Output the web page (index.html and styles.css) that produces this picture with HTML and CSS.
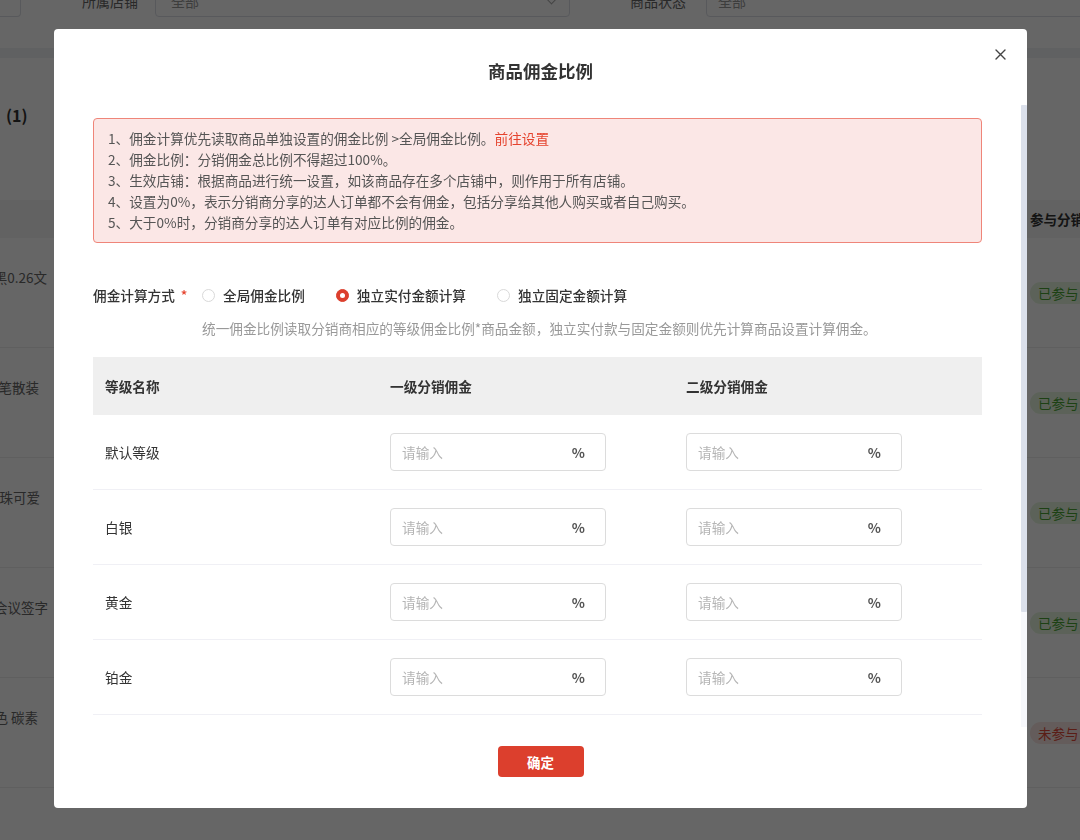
FILE: index.html
```html
<!DOCTYPE html>
<html lang="zh-CN">
<head>
<meta charset="utf-8">
<title>商品佣金比例</title>
<link rel="stylesheet" href="styles.css">
</head>
<body>
<div class="page">
  <div class="filter-card">
    <div class="filter-row">
      <div class="control first"></div>
      <span class="flabel l1">所属店铺</span>
      <div class="control select">全部<span class="chev"></span></div>
      <span class="flabel l2">商品状态</span>
      <div class="control status">全部</div>
    </div>
  </div>
  <div class="list-card">
    <div class="list-title">(1)</div>
    <div class="bg-table">
      <div class="bg-head">
        <div class="bg-name"></div>
        <div></div>
        <div class="bg-status">参与分销</div>
      </div>
      <div class="bg-row">
        <div class="bg-name"><span>色黑0.26文</span></div>
        <div></div>
        <div class="bg-status"><span class="pill on">已参与</span></div>
      </div>
      <div class="bg-row">
        <div class="bg-name"><span>性笔散装</span></div>
        <div></div>
        <div class="bg-status"><span class="pill on">已参与</span></div>
      </div>
      <div class="bg-row">
        <div class="bg-name"><span>圆珠可爱</span></div>
        <div></div>
        <div class="bg-status"><span class="pill on">已参与</span></div>
      </div>
      <div class="bg-row">
        <div class="bg-name"><span>公会议签字</span></div>
        <div></div>
        <div class="bg-status"><span class="pill on">已参与</span></div>
      </div>
      <div class="bg-row">
        <div class="bg-name"><span>黑色 碳素</span></div>
        <div></div>
        <div class="bg-status"><span class="pill off">未参与</span></div>
      </div>
      <div class="bg-row">
        <div class="bg-name"><span></span></div>
        <div></div>
        <div class="bg-status"></div>
      </div>
    </div>
  </div>
</div>

<div class="mask"></div>

<div class="modal">
  <div class="modal-header">商品佣金比例</div>
  <button class="close" aria-label="关闭">
    <svg width="11" height="11" viewBox="0 0 11 11"><path d="M1 1 L10 10 M10 1 L1 10" stroke="#444" stroke-width="1.4" stroke-linecap="round" fill="none"/></svg>
  </button>
  <div class="modal-body">
    <div class="notice">
      <p>1、佣金计算优先读取商品单独设置的佣金比例 &gt;全局佣金比例。<a class="notice-link">前往设置</a></p>
      <p>2、佣金比例：分销佣金总比例不得超过100%。</p>
      <p>3、生效店铺：根据商品进行统一设置，如该商品存在多个店铺中，则作用于所有店铺。</p>
      <p>4、设置为0%，表示分销商分享的达人订单都不会有佣金，包括分享给其他人购买或者自己购买。</p>
      <p>5、大于0%时，分销商分享的达人订单有对应比例的佣金。</p>
    </div>

    <div class="form-row">
      <div class="form-label">佣金计算方式<span class="req">*</span></div>
      <div class="radio-group">
        <label class="radio"><span class="radio-dot"></span>全局佣金比例</label>
        <label class="radio"><span class="radio-dot checked"></span>独立实付金额计算</label>
        <label class="radio"><span class="radio-dot"></span>独立固定金额计算</label>
      </div>
    </div>
    <div class="hint">统一佣金比例读取分销商相应的等级佣金比例*商品金额，独立实付款与固定金额则优先计算商品设置计算佣金。</div>

    <div class="level-table">
      <div class="thead">
        <div class="cell-name">等级名称</div>
        <div>一级分销佣金</div>
        <div>二级分销佣金</div>
      </div>
      <div class="trow">
        <div class="cell-name">默认等级</div>
        <div class="pct-input"><span class="ph">请输入</span><span class="pct">%</span></div>
        <div class="pct-input"><span class="ph">请输入</span><span class="pct">%</span></div>
      </div>
      <div class="trow">
        <div class="cell-name">白银</div>
        <div class="pct-input"><span class="ph">请输入</span><span class="pct">%</span></div>
        <div class="pct-input"><span class="ph">请输入</span><span class="pct">%</span></div>
      </div>
      <div class="trow">
        <div class="cell-name">黄金</div>
        <div class="pct-input"><span class="ph">请输入</span><span class="pct">%</span></div>
        <div class="pct-input"><span class="ph">请输入</span><span class="pct">%</span></div>
      </div>
      <div class="trow">
        <div class="cell-name">铂金</div>
        <div class="pct-input"><span class="ph">请输入</span><span class="pct">%</span></div>
        <div class="pct-input"><span class="ph">请输入</span><span class="pct">%</span></div>
      </div>
      <div class="trow">
        <div class="cell-name">钻石</div>
        <div class="pct-input"><span class="ph">请输入</span><span class="pct">%</span></div>
        <div class="pct-input"><span class="ph">请输入</span><span class="pct">%</span></div>
      </div>
      <div class="trow">
        <div class="cell-name">黑钻</div>
        <div class="pct-input"><span class="ph">请输入</span><span class="pct">%</span></div>
        <div class="pct-input"><span class="ph">请输入</span><span class="pct">%</span></div>
      </div>
    </div>
  </div>
  <div class="scrollbar"><div class="scroll-thumb"></div></div>
  <div class="modal-footer">
    <button class="btn-primary">确定</button>
  </div>
</div>
</body>
</html>
```

FILE: styles.css
```css
* {
  box-sizing: border-box;
  margin: 0;
  padding: 0;
}

html, body {
  width: 1080px;
  height: 840px;
  overflow: hidden;
}

body {
  font-family: "Noto Sans CJK SC", "Noto Sans", sans-serif;
  background: #f0f2f5;
  color: #333;
}

/* ---------- background page ---------- */
.page {
  margin-top: -15px;
}

.filter-card {
  background: #fff;
  padding-bottom: 31px;
}

.filter-row {
  display: flex;
  align-items: center;
  height: 32px;
  font-size: 14px;
}

.filter-row > * {
  flex: none;
}

.control {
  height: 32px;
  border: 1px solid #dcdfe6;
  border-radius: 4px;
  display: flex;
  align-items: center;
  color: #999;
}

.control.first {
  width: 21px;
  border-left: none;
  border-radius: 0 4px 4px 0;
}

.flabel {
  color: #666;
  white-space: nowrap;
}

.flabel.l1 {
  margin-left: 61px;
  margin-right: 17px;
}

.flabel.l2 {
  margin-left: 60px;
  margin-right: 20px;
}

.control.select {
  width: 415px;
  padding-left: 15px;
  justify-content: space-between;
  padding-right: 14px;
}

.chev {
  width: 7px;
  height: 7px;
  border-right: 1px solid #aaa;
  border-bottom: 1px solid #aaa;
  transform: rotate(45deg);
  margin-top: -4px;
}

.control.status {
  width: 400px;
  padding-left: 11px;
}

.list-card {
  margin-top: 10px;
  background: #fff;
  padding-top: 45px;
  height: 800px;
}

.list-title {
  padding-left: 6px;
  font-size: 16px;
  line-height: 24px;
  font-weight: 600;
  color: #333;
}

.bg-table {
  margin-top: 73px;
}

.bg-head, .bg-row {
  display: grid;
  grid-template-columns: 50px 980px 120px;
  align-items: center;
}

.bg-head {
  height: 38px;
  background: #f5f5f5;
  font-size: 13.5px;
  font-weight: 600;
  color: #333;
}

.bg-row {
  height: 110px;
  border-bottom: 1px solid #eee;
  font-size: 13.5px;
  color: #666;
}

.bg-name {
  display: flex;
  justify-content: flex-end;
  overflow: hidden;
  white-space: nowrap;
  padding-right: 3px;
  align-self: start;
}

.bg-row .bg-name {
  padding-top: 29px;
}

.bg-row:nth-child(3) .bg-name { padding-right: 11px; }
.bg-row:nth-child(4) .bg-name { padding-right: 10px; }
.bg-row:nth-child(5) .bg-name { padding-right: 2px; }
.bg-row:nth-child(6) .bg-name { padding-right: 12px; }

.pill {
  display: inline-block;
  height: 22px;
  line-height: 22px;
  padding: 0 10px 0 8px;
  border-radius: 11px;
  font-size: 13.5px;
  white-space: nowrap;
}

.pill.on {
  background: #e6f6df;
  color: #4aa434;
}

.pill.off {
  background: #fbe6e3;
  color: #e24a39;
}

.mask {
  position: fixed;
  inset: 0;
  background: rgba(0, 0, 0, 0.6);
}

/* ---------- modal ---------- */
.modal {
  position: fixed;
  left: 54px;
  top: 29px;
  width: 973px;
  height: 779px;
  background: #fff;
  border-radius: 4px;
  display: flex;
  flex-direction: column;
  overflow: hidden;
}

.modal-header {
  flex: none;
  height: 73px;
  padding-top: 30px;
  text-align: center;
  font-size: 17.5px;
  line-height: 24px;
  font-weight: 600;
  color: #333;
}

.close {
  position: absolute;
  top: 20px;
  right: 21px;
  width: 11px;
  height: 11px;
  border: none;
  background: none;
  display: flex;
}

.modal-body {
  flex: 1;
  overflow-y: auto;
  scrollbar-width: none;
  padding: 16px 45px 3px 39px;
  font-size: 13.65px;
}

/* scrollbar drawn over the body's right edge */
.scrollbar {
  position: absolute;
  right: 0;
  top: 76px;
  width: 6px;
  height: 622px;
  background: #f7f8fc;
}

.scroll-thumb {
  height: 507px;
  background: #dbe0eb;
  border-radius: 1px;
}

.notice {
  border: 1px solid #ef8579;
  background: #fbe7e6;
  border-radius: 4px;
  padding: 9px 14px;
  line-height: 21px;
  color: #555;
}

.notice-link {
  color: #e5432e;
}

.form-row {
  display: flex;
  align-items: center;
  margin-top: 41px;
  height: 22px;
}

.form-label {
  width: 109px;
  flex: none;
  color: #333;
  font-weight: 500;
}

.req {
  color: #e5432e;
  margin-left: 6px;
}

.radio-group {
  display: flex;
  gap: 31px;
}

.radio {
  display: flex;
  align-items: center;
  gap: 8px;
  color: #333;
  font-weight: 500;
}

.radio-dot {
  width: 13px;
  height: 13px;
  border: 1px solid #d9d9d9;
  border-radius: 50%;
  background: #fff;
  display: flex;
  align-items: center;
  justify-content: center;
}

.radio-dot.checked {
  background: #dc3f2d;
  border-color: #dc3f2d;
}

.radio-dot.checked::after {
  content: "";
  width: 5px;
  height: 5px;
  border-radius: 50%;
  background: #fff;
}

.hint {
  margin-top: 12px;
  padding-left: 109px;
  line-height: 21px;
  color: #999;
}

.level-table {
  margin-top: 18px;
}

.thead, .trow {
  display: grid;
  grid-template-columns: 297px 296px 1fr;
  align-items: center;
}

.thead {
  height: 58px;
  background: #efefef;
  font-weight: 600;
  color: #333;
}

.trow {
  height: 75px;
  border-bottom: 1px solid #f0f0f5;
  color: #333;
}

.cell-name {
  padding-left: 12px;
}

.pct-input {
  width: 216px;
  height: 38px;
  border: 1px solid #dcdcdc;
  border-radius: 4px;
  display: flex;
  align-items: center;
  justify-content: space-between;
  padding: 0 20px 0 11px;
}

.ph {
  color: #b5b5b5;
}

.pct {
  color: #555;
  font-weight: 600;
}

.modal-footer {
  flex: none;
  height: 81px;
  padding-top: 19px;
  display: flex;
  justify-content: center;
  align-items: flex-start;
}

.btn-primary {
  width: 86px;
  height: 31px;
  border: none;
  border-radius: 4px;
  background: #dc3f2d;
  color: #fff;
  font-family: "Noto Sans CJK SC", "Noto Sans", sans-serif;
  font-size: 13.5px;
  font-weight: 600;
}
```
